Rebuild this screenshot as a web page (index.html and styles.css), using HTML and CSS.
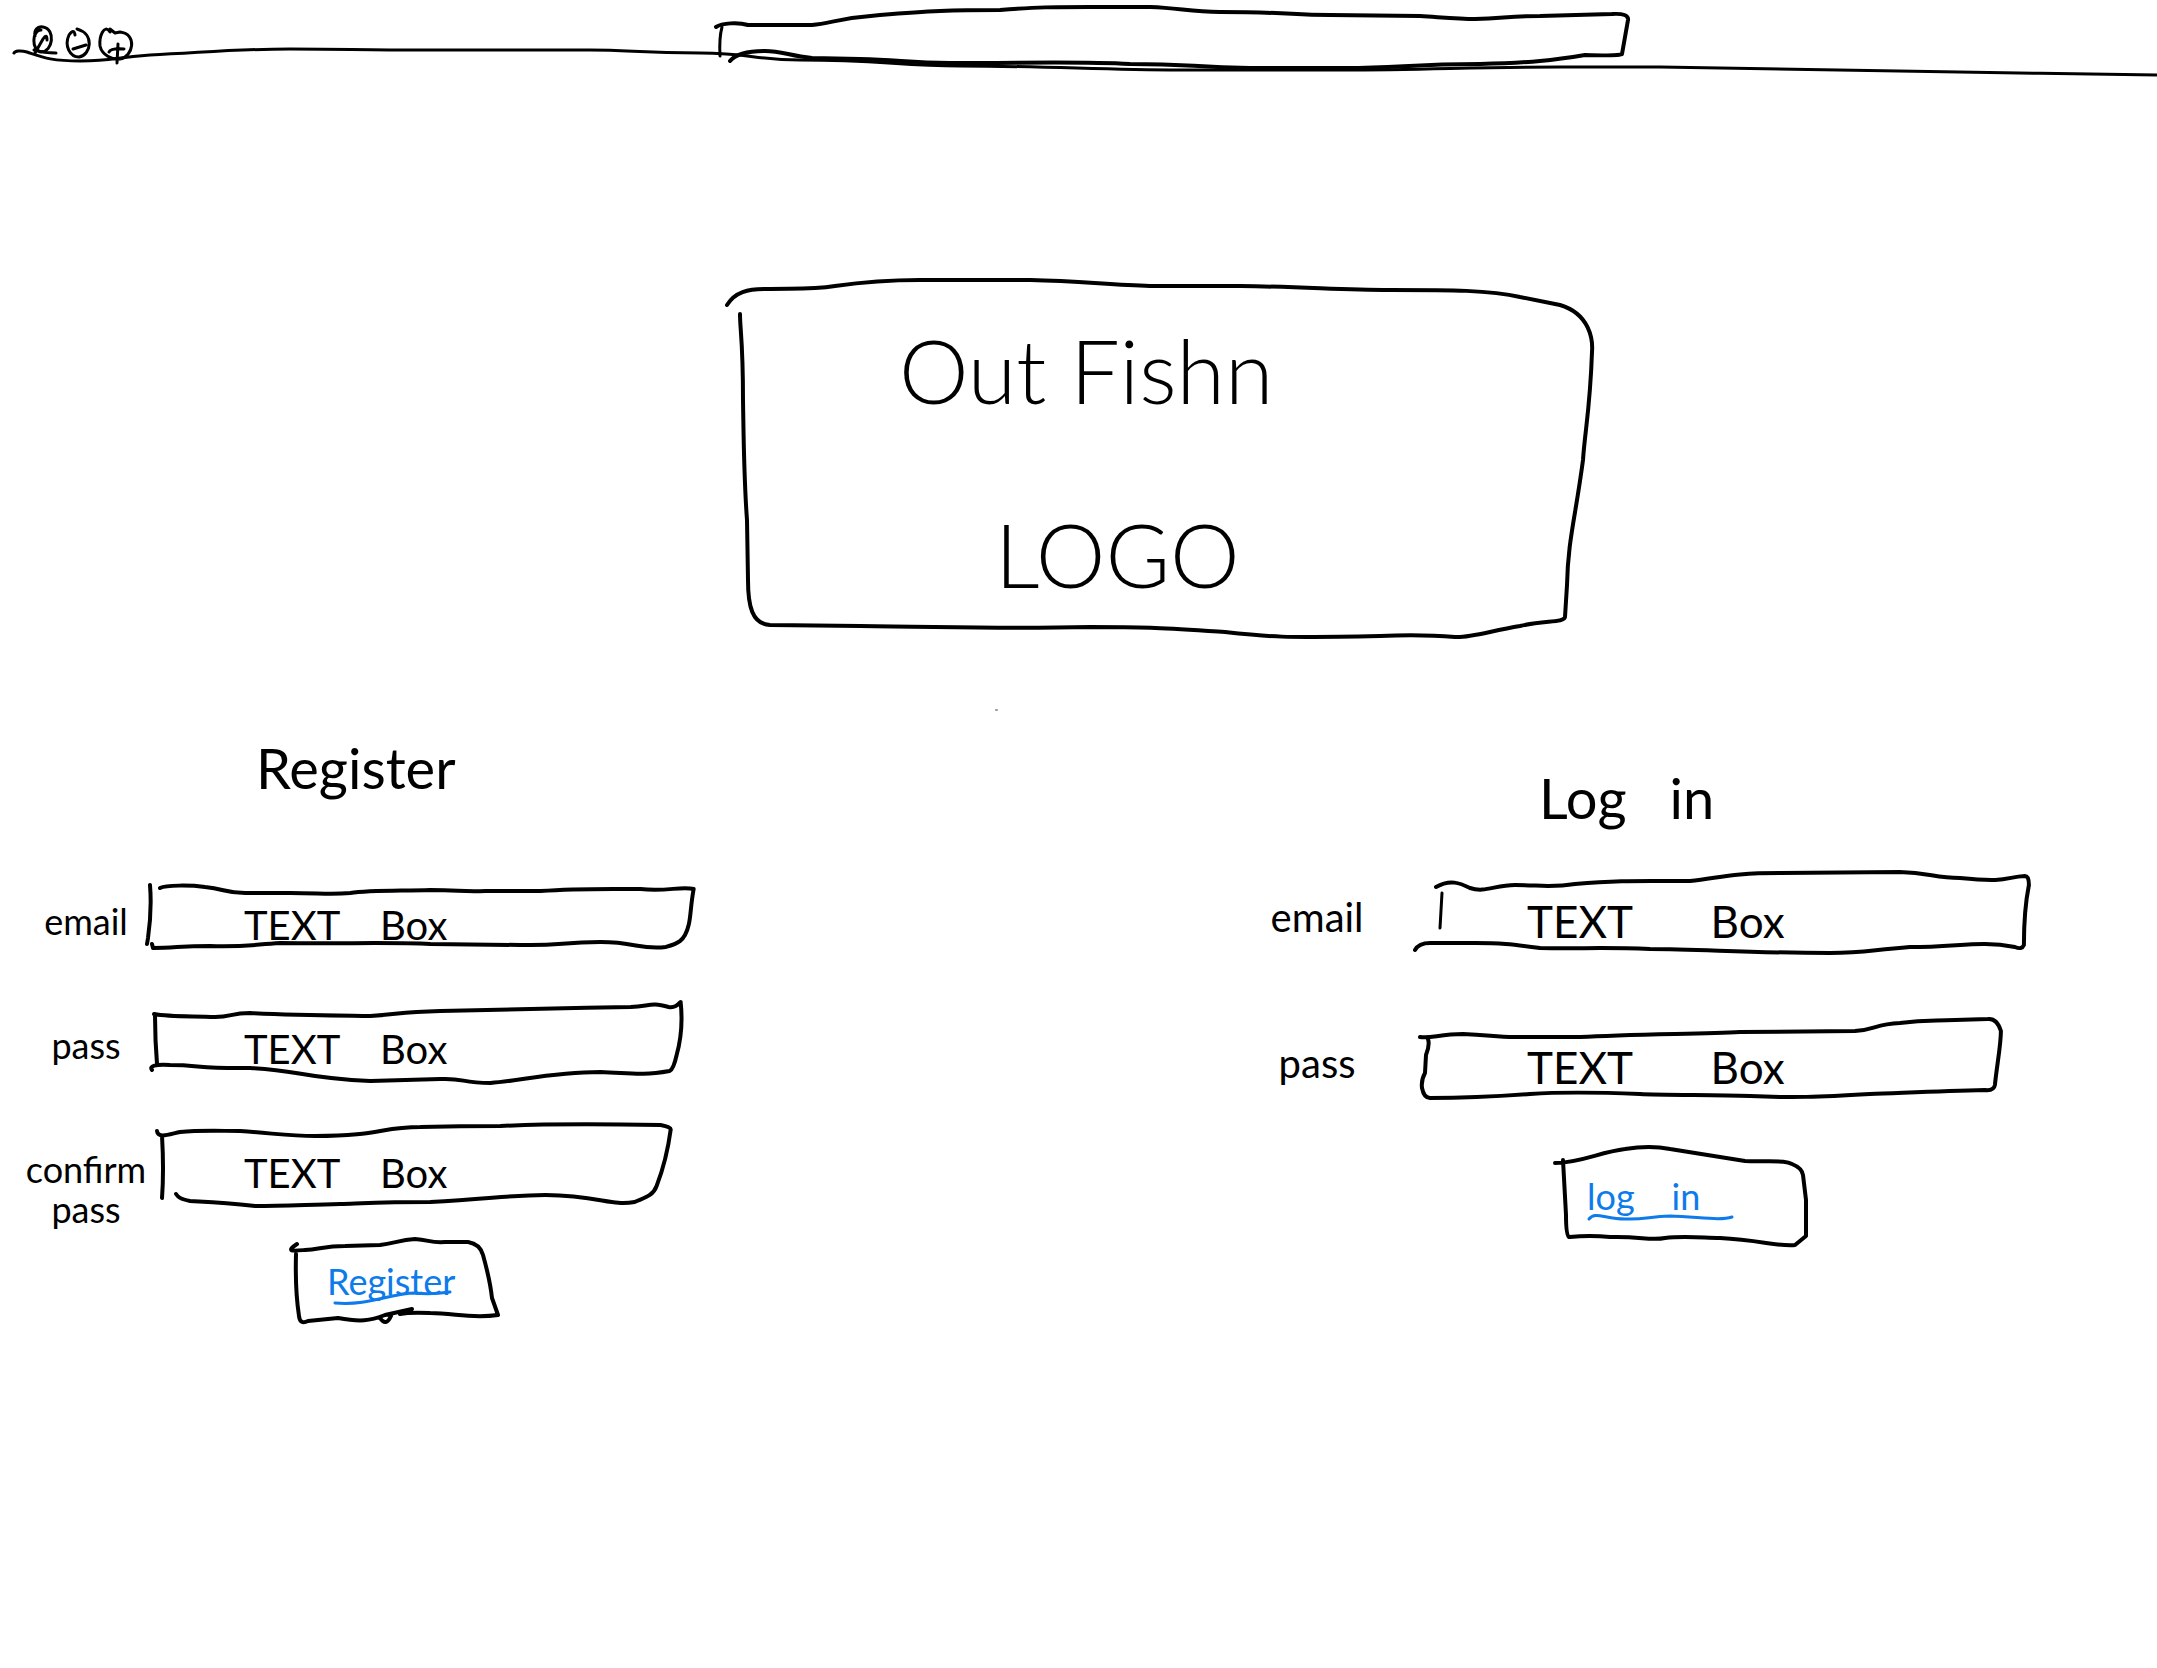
FILE: index.html
```html
<!DOCTYPE html>
<html lang="en">
<head>
<meta charset="utf-8">
<meta name="viewport" content="width=device-width, initial-scale=1">
<title>Out Fishn</title>
<link rel="stylesheet" href="styles.css">
</head>
<body>
<header class="chrome">
  <svg class="sketch chrome-line" viewBox="0 0 2157 76" preserveAspectRatio="none" aria-hidden="true">
    <path d="M14 53C15 51 20 50 27 52C42 57 50 61 80 61C115 61 110 58 150 55C200 53 230 49 290 49C350 49 350 50 390 50L590 50C630 50 640 53 700 53C750 53 755 60 800 60C880 60 900 66 960 66C1050 66 1100 70 1180 70L1340 70C1430 70 1470 67 1560 67L1660 67C1820 69 1990 73 2157 75"/>
  </svg>
  <div class="controls">
    <button class="control" type="button" aria-label="Close">
      <svg width="28" height="40" viewBox="32 22 28 40" aria-hidden="true"><path d="M41 28C32 28 31 48 41 50C53 50 56 27 43 25C37 24 34 28 35 34M35 51L43 37Q47 31 47 38M34 48Q44 51 56 51"/></svg>
    </button>
    <button class="control" type="button" aria-label="Minimize">
      <svg width="28" height="40" viewBox="64 22 28 40" aria-hidden="true"><path d="M75 33Q74 26 69 33C64 44 70 55 79 55C91 53 95 32 77 27M73 47L86 43"/></svg>
    </button>
    <button class="control" type="button" aria-label="Zoom">
      <svg width="40" height="40" viewBox="96 22 40 40" aria-hidden="true"><path d="M110 30C104 21 99 35 100 44C102 53 112 58 120 57C133 55 138 32 120 30L115 31L110 27M109 50Q111 46 124 47M118 42L117 61"/></svg>
    </button>
  </div>
  <div class="address">
    <svg class="sketch" viewBox="716 6 912 64" preserveAspectRatio="none" aria-hidden="true">
      <path d="M716 27C722 23 738 22 748 25L812 25C832 23 840 18 880 15C930 11 950 10 1000 10C1040 7 1050 7 1090 7L1150 7C1180 8 1190 12 1220 12C1290 12 1290 15 1330 15L1420 16C1450 18 1460 19 1475 19C1505 18 1510 16 1540 16L1612 14Q1629 13 1628 20L1622 54Q1620 56 1585 55C1555 60 1530 63 1480 64C1410 64 1400 68 1345 68L1250 68C1190 67 1190 64 1130 64C1080 61 1030 63 950 63C910 63 900 60 860 59L812 58C790 56 782 51 765 51C745 51 734 56 730 61"/>
      <path class="thin" d="M722 27Q719 38 720 56"/>
    </svg>
    <input class="address-input" type="text" aria-label="Address">
  </div>
</header>

<main>
  <section class="logo-row">
    <div class="logo">
      <svg class="sketch" viewBox="727 280 865 357" preserveAspectRatio="none" aria-hidden="true">
        <path d="M727 305C735 292 748 289 765 289C790 288 810 290 835 286C870 281 895 280 920 280L1030 280C1080 281 1110 285 1150 286L1240 286C1310 287 1340 290 1390 290C1450 290 1490 290 1520 297L1560 305C1590 314 1593 340 1592 352C1590 410 1585 430 1583 460C1575 520 1568 540 1567 585L1565 617C1564 623 1545 620 1520 626C1490 631 1470 638 1455 637C1430 635 1405 635 1380 636C1280 638 1270 637 1225 632C1160 628 1150 627 1090 627C1000 629 960 627 860 626L770 625C752 624 748 606 748 580L747 520C744 480 744 460 743 400C743 340 740 330 740 314"/>
        <path class="speck" d="M996 710h1"/>
      </svg>
      <h1 class="logo-text"><span>Out Fishn</span> <span class="logo-word">LOGO</span></h1>
    </div>
  </section>

  <div class="forms">
    <form class="form register">
      <h2 class="title">Register</h2>
      <div class="fields">
        <div class="field">
          <label for="reg-email">email</label>
          <div class="box">
            <svg class="sketch" viewBox="148 877 545 80" preserveAspectRatio="none" aria-hidden="true"><path d="M150 885Q152 910 148 938L147 944M160 888C166 885 190 885 205 887C225 889 225 893 245 893L290 893C320 893 330 895 350 893C370 890 400 891 430 890C460 890 460 892 485 891L540 891C580 888 620 889 640 889C665 892 680 886 693 889C690 905 690 918 688 925C684 942 676 944 665 947C640 950 635 942 600 942C560 942 560 946 520 945L430 944C390 942 340 944 280 943C250 945 245 947 210 946C180 946 175 948 153 948L152 944"/></svg>
            <input id="reg-email" type="text" value="TEXT    Box">
          </div>
        </div>
        <div class="field">
          <label for="reg-pass">pass</label>
          <div class="box">
            <svg class="sketch" viewBox="148 1001 545 80" preserveAspectRatio="none" aria-hidden="true"><path d="M154 1014C170 1017 190 1016 215 1017C232 1017 230 1013 250 1013C290 1015 300 1015 370 1016C400 1014 400 1012 440 1011C520 1009 570 1008 630 1007C650 1006 650 1002 668 1007C674 1008 677 1005 680 1002Q683 1030 676 1055Q673 1069 669 1071C640 1076 630 1073 600 1072C550 1072 520 1081 490 1083C460 1083 465 1078 440 1079L370 1081C300 1078 300 1070 250 1068C200 1069 200 1065 170 1065C155 1064 149 1066 152 1070M155 1014Q155 1040 157 1064"/></svg>
            <input id="reg-pass" type="text" value="TEXT    Box">
          </div>
        </div>
        <div class="field">
          <label for="reg-confirm">confirm pass</label>
          <div class="box">
            <svg class="sketch" viewBox="148 1125 545 80" preserveAspectRatio="none" aria-hidden="true"><path d="M157 1131C158 1139 170 1134 180 1132C200 1130 220 1131 240 1131C280 1134 290 1136 315 1136C380 1136 380 1127 420 1127C460 1126 480 1126 500 1126C540 1124 600 1124 660 1125Q671 1127 670 1130Q666 1160 656 1186C652 1197 642 1198 634 1202C610 1206 600 1196 545 1195C510 1195 490 1199 430 1202C390 1202 370 1203 340 1204C300 1205 280 1206 255 1206C220 1202 210 1202 190 1201C180 1199 178 1197 176 1194M162 1136Q164 1170 162 1198"/></svg>
            <input id="reg-confirm" type="text" value="TEXT    Box">
          </div>
        </div>
      </div>
      <button class="submit" type="button">
        <svg class="sketch" viewBox="291 1239 207 84" preserveAspectRatio="none" aria-hidden="true"><path d="M297 1244C285 1252 293 1251 305 1250C320 1249 325 1246 345 1246L380 1245C395 1243 400 1240 415 1239C430 1240 430 1243 445 1242L468 1242Q480 1244 483 1255Q490 1280 492 1298L498 1315C470 1319 455 1313 430 1313Q410 1312 400 1314M296 1254Q295 1290 299 1316Q300 1325 308 1321L338 1318C360 1322 370 1321 385 1315L412 1309M380 1318Q386 1327 391 1316"/><path class="link-line" d="M335 1303C370 1306 390 1293 415 1293Q430 1295 450 1292"/></svg>
        <span class="submit-text">Register</span>
      </button>
    </form>

    <form class="form login">
      <h2 class="title">Log   in</h2>
      <div class="fields">
        <div class="field">
          <label for="log-email">email</label>
          <div class="box">
            <svg class="sketch" viewBox="1415 873 614 80" preserveAspectRatio="none" aria-hidden="true"><path d="M1436 887C1450 879 1460 883 1470 888C1485 893 1495 885 1515 885C1540 885 1550 888 1575 884C1620 880 1640 881 1690 881C1720 878 1730 873 1780 873L1900 872C1930 873 1935 878 1960 878C2010 883 2005 877 2025 876Q2029 876 2029 885Q2024 910 2024 945Q2022 950 2015 947C1980 940 1960 947 1910 947C1870 950 1865 953 1830 953C1750 953 1700 949 1650 949C1600 947 1580 949 1540 948C1510 944 1500 943 1475 943L1430 943Q1419 943 1415 950"/><path class="thin" d="M1442 893L1440 928"/></svg>
            <input id="log-email" type="text" value="TEXT       Box">
          </div>
        </div>
        <div class="field">
          <label for="log-pass">pass</label>
          <div class="box">
            <svg class="sketch" viewBox="1415 1019 614 80" preserveAspectRatio="none" aria-hidden="true"><path d="M1420 1037C1430 1039 1440 1034 1463 1034C1490 1035 1495 1037 1515 1037L1580 1037C1630 1034 1700 1034 1740 1032L1855 1031C1875 1030 1875 1024 1900 1023C1925 1020 1930 1021 1955 1020L1988 1019Q1997 1018 2001 1031C2001 1045 1997 1065 1995 1085Q1994 1091 1985 1090C1940 1091 1900 1093 1870 1094C1820 1097 1790 1098 1750 1096C1710 1095 1660 1095 1640 1094C1590 1092 1560 1092 1530 1094C1490 1097 1470 1098 1430 1098Q1424 1098 1422 1088Q1421 1080 1425 1073L1426 1055Q1430 1045 1428 1039"/></svg>
            <input id="log-pass" type="text" value="TEXT       Box">
          </div>
        </div>
      </div>
      <button class="submit" type="button">
        <svg class="sketch" viewBox="1555 1146 252 100" preserveAspectRatio="none" aria-hidden="true"><path d="M1555 1163C1580 1163 1600 1152 1625 1149Q1650 1145 1670 1149L1745 1161C1775 1162 1785 1160 1792 1164Q1802 1168 1803 1175L1806 1200L1806 1236L1795 1245C1780 1247 1760 1240 1720 1238C1690 1237 1680 1236 1665 1238C1650 1241 1640 1236 1610 1237C1590 1235 1580 1236 1569 1237Q1566 1235 1566 1215L1563 1160"/><path class="link-line" d="M1589 1219C1595 1211 1605 1219 1625 1219C1645 1220 1650 1216 1670 1216C1700 1217 1720 1221 1732 1217"/></svg>
        <span class="submit-text">log    in</span>
      </button>
    </form>
  </div>
</main>
</body>
</html>
```
FILE: styles.css
```css
* {
  box-sizing: border-box;
}

body {
  margin: 0;
  min-height: 100vh;
  overflow-x: hidden;
  background: #fff;
  color: #000;
  font-family: Lato, "Open Sans", sans-serif;
  font-size: 36px;
  line-height: 40px;
}

h1,
h2 {
  margin: 0;
  font-weight: 400;
}

button,
input {
  border: 0;
  padding: 0;
  background: none;
  color: inherit;
  font: inherit;
}

input {
  width: 100%;
  min-width: 0;
}

/* Hand-drawn outlines stretch with the box they frame */
.sketch {
  position: absolute;
  inset: 0;
  width: 100%;
  height: 100%;
  overflow: visible;
  pointer-events: none;
}

.sketch path {
  fill: none;
  stroke: #000;
  stroke-width: 4px;
  stroke-linecap: round;
  stroke-linejoin: round;
  vector-effect: non-scaling-stroke;
}

.sketch .thin,
.chrome-line path {
  stroke-width: 3px;
}

.sketch .speck {
  stroke: #999;
  stroke-width: 2px;
}

.sketch .link-line {
  stroke: #0d7bea;
  stroke-width: 3px;
}

.chrome {
  position: relative;
  display: grid;
  grid-template-columns: 716fr 912fr 529fr;
  height: 76px;
}

.controls {
  display: flex;
  gap: 4px;
  padding: 24px 0 0 32px;
}

.control {
  display: block;
  height: 40px;
}

.control svg {
  display: block;
  overflow: visible;
  fill: none;
  stroke: #000;
  stroke-width: 3px;
  stroke-linecap: round;
  stroke-linejoin: round;
}

.address {
  position: relative;
  height: 64px;
  margin-top: 6px;
}

.address-input {
  height: 100%;
  padding: 0 24px;
}

.logo-row {
  display: grid;
  grid-template-columns: 727fr 865fr 565fr;
  padding-top: 204px;
}

.logo {
  position: relative;
  grid-column: 2;
  min-height: 357px;
  padding: 40px 0 0 172px;
}

.logo-text {
  display: flex;
  flex-direction: column;
  gap: 84px;
  font-size: 88px;
  font-weight: 300;
  line-height: 100px;
}

.logo-word {
  padding-left: 96px;
}

.forms {
  display: flex;
  justify-content: space-between;
  align-items: flex-start;
  padding: 63px 128px 64px 24px;
}

.form {
  display: flex;
  flex-direction: column;
  align-items: flex-start;
}

.register {
  width: 33.4%;
}

.login {
  width: 38.2%;
}

.title {
  font-size: 56px;
  line-height: 64px;
  white-space: pre;
}

.register .title {
  padding: 36px 0 77px 232px;
}

.login .title {
  padding: 66px 0 43px 276px;
}

.fields {
  display: flex;
  flex-direction: column;
  width: 100%;
}

.register .fields {
  gap: 44px;
}

.login .fields {
  gap: 66px;
}

.field {
  display: grid;
  grid-template-columns: 124px 1fr;
  align-items: start;
}

.login .field {
  grid-template-columns: 152px 1fr;
}

.field label {
  padding-top: 24px;
  text-align: center;
}

.login .field label {
  padding-right: 44px;
  font-size: 40px;
}

.box {
  position: relative;
  height: 80px;
}

.box input {
  position: relative;
  height: 80px;
  padding: 16px 0 0 96px;
  font-size: 40px;
}

.login .box input {
  padding-left: 112px;
  font-size: 44px;
}

.submit {
  position: relative;
  color: #0d7bea;
  text-align: left;
}

.submit-text {
  white-space: pre;
}

.register .submit {
  width: 207px;
  height: 84px;
  margin: 10px 0 0 267px;
  padding-left: 36px;
}

.login .submit {
  width: 252px;
  height: 100px;
  margin: 47px 0 0 292px;
  padding-left: 32px;
}
```
